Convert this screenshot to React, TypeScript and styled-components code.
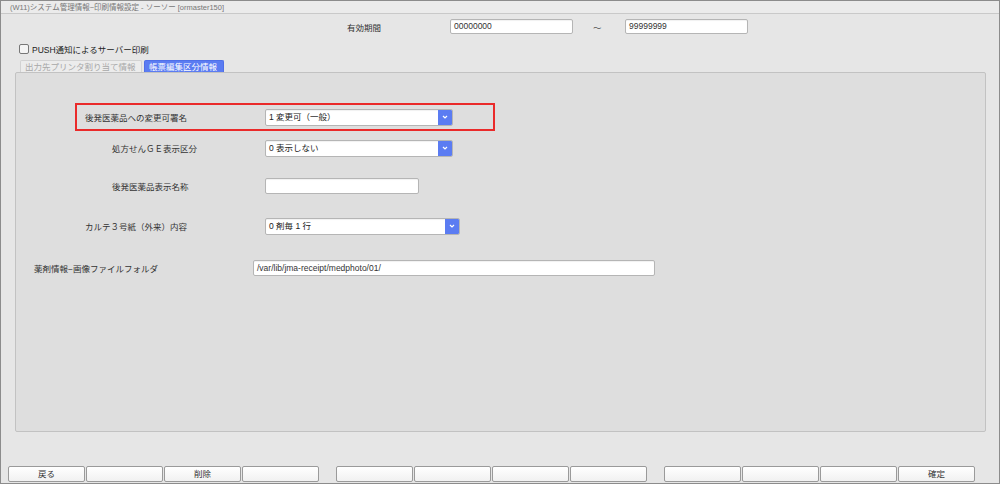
import React from 'react';
import styled, { createGlobalStyle } from 'styled-components';

const GlobalStyle = createGlobalStyle`
  html, body {
    margin: 0;
    padding: 0;
    background: #ffffff;
  }
  body {
    font-family: "Liberation Sans", "Noto Sans CJK JP", sans-serif;
  }
  * {
    box-sizing: border-box;
  }
`;

const Window = styled.div`
  width: 1000px;
  height: 484px;
  border: 1px solid #8c8c8c;
  background: #e6e6e6;
  display: flex;
  flex-direction: column;
  font-size: 8.5px;
  color: #222;
`;

const TitleBar = styled.div`
  height: 13px;
  line-height: 13px;
  padding-left: 9px;
  font-size: 7.5px;
  color: #777;
  background: #ebebeb;
  border-bottom: 1px solid #c9c9c9;
`;

const Header = styled.div`
  height: 58px;
  display: flex;
  flex-direction: column;
`;

const PeriodRow = styled.div`
  display: flex;
  align-items: center;
  height: 15px;
  margin-top: 5px;
  padding-left: 346px;
`;

const PeriodLabel = styled.span`
  width: 103px;
  color: #333;
`;

const Tilde = styled.span`
  width: 52px;
  padding-left: 20px;
  color: #555;
`;

const TextBox = styled.div<{ $width: number; $height?: number }>`
  width: ${(p) => p.$width}px;
  height: ${(p) => p.$height ?? 15}px;
  line-height: ${(p) => (p.$height ?? 15) - 2}px;
  background: #fff;
  border: 1px solid #b5b5b5;
  border-radius: 2px;
  padding-left: 3px;
  color: #333;
  box-shadow: inset 0 1px 1px rgba(0, 0, 0, 0.06);
  white-space: nowrap;
  overflow: hidden;
`;

const CheckRow = styled.label`
  display: flex;
  align-items: center;
  gap: 3px;
  height: 12px;
  margin-top: 9px;
  padding-left: 18px;
  color: #222;
`;

const CheckBox = styled.span`
  width: 10px;
  height: 10px;
  border: 1px solid #777;
  border-radius: 2px;
  background: #f4f4f4;
`;

const TabStrip = styled.div`
  display: flex;
  gap: 2px;
  margin-top: 5px;
  padding-left: 19px;
  height: 14px;
`;

const Tab = styled.div<{ $active?: boolean; $width: number }>`
  width: ${(p) => p.$width}px;
  height: 14px;
  line-height: 13px;
  padding-left: 4px;
  border: 1px solid ${(p) => (p.$active ? '#4f6fe8' : '#d2d2d2')};
  border-bottom: none;
  border-radius: 2px 2px 0 0;
  background: ${(p) => (p.$active ? '#5b7cf2' : '#ececec')};
  color: ${(p) => (p.$active ? '#ffffff' : '#a8a8a8')};
  white-space: nowrap;
`;

const Panel = styled.div`
  height: 360px;
  margin: 0 13px 0 14px;
  background: #dedede;
  border: 1px solid #c2c2c2;
  border-radius: 2px;
  display: flex;
  flex-direction: column;
`;

const Highlight = styled.div`
  display: flex;
  align-items: center;
  width: 420px;
  height: 28px;
  margin: 30px 0 0 59px;
  padding-left: 8px;
  border: 2px solid #ea2a2a;
`;

const Row = styled.div<{ $left: number; $top: number }>`
  display: flex;
  align-items: center;
  height: 20px;
  margin-top: ${(p) => p.$top}px;
  padding-left: ${(p) => p.$left}px;
`;

const Label = styled.span<{ $width: number }>`
  width: ${(p) => p.$width}px;
  color: #333;
  white-space: nowrap;
`;

const SelectBox = styled.div<{ $width: number }>`
  width: ${(p) => p.$width}px;
  height: 17px;
  display: flex;
  background: #fff;
  border: 1px solid #b5b5b5;
  border-radius: 2px;
  overflow: hidden;
  box-shadow: inset 0 1px 1px rgba(0, 0, 0, 0.06);
`;

const SelectText = styled.span`
  flex: 1;
  line-height: 15px;
  padding-left: 3px;
  color: #222;
  white-space: nowrap;
`;

const SelectButton = styled.span`
  width: 14px;
  display: flex;
  align-items: center;
  justify-content: center;
  background: #5b7cf2;
`;

const Footer = styled.div`
  flex: 1;
  display: flex;
  align-items: flex-end;
  gap: 17px;
  padding: 0 0 1px 7px;
`;

const ButtonGroup = styled.div`
  display: flex;
  gap: 1px;
`;

const FnButton = styled.button`
  width: 77px;
  height: 16px;
  padding: 0;
  font: inherit;
  font-size: 8.5px;
  color: #333;
  background: linear-gradient(#ffffff, #f1f1f1);
  border: 1px solid #9a9a9a;
  border-radius: 2px;
  line-height: 14px;
`;

const Chevron = () => (
  <svg width="6" height="4" viewBox="0 0 6 4">
    <path d="M1 1 L3 3 L5 1" stroke="#fff" strokeWidth="1.2" fill="none" />
  </svg>
);

const Select: React.FC<{ width: number; value: string }> = ({ width, value }) => (
  <SelectBox $width={width}>
    <SelectText>{value}</SelectText>
    <SelectButton>
      <Chevron />
    </SelectButton>
  </SelectBox>
);

const buttonGroups = [
  ['戻る', '', '削除', ''],
  ['', '', '', ''],
  ['', '', '', '確定'],
];

const App: React.FC = () => {
  return (
    <>
      <GlobalStyle />
      <Window>
        <TitleBar>(W11)システム管理情報−印刷情報設定 - ソーソー [ormaster150]</TitleBar>
        <Header>
          <PeriodRow>
            <PeriodLabel>有効期間</PeriodLabel>
            <TextBox $width={123}>00000000</TextBox>
            <Tilde>～</Tilde>
            <TextBox $width={123}>99999999</TextBox>
          </PeriodRow>
          <CheckRow>
            <CheckBox />
            PUSH通知によるサーバー印刷
          </CheckRow>
          <TabStrip>
            <Tab $width={122}>出力先プリンタ割り当て情報</Tab>
            <Tab $width={80} $active>
              帳票編集区分情報
            </Tab>
          </TabStrip>
        </Header>
        <Panel>
          <Highlight>
            <Label $width={180}>後発医薬品への変更可署名</Label>
            <Select width={188} value="1 変更可（一般）" />
          </Highlight>
          <Row $left={96} $top={7}>
            <Label $width={153}>処方せんＧＥ表示区分</Label>
            <Select width={188} value="0 表示しない" />
          </Row>
          <Row $left={96} $top={18}>
            <Label $width={153}>後発医薬品表示名称</Label>
            <TextBox $width={154} $height={16} />
          </Row>
          <Row $left={69} $top={20}>
            <Label $width={180}>カルテ３号紙（外来）内容</Label>
            <Select width={195} value="0 剤毎 1 行" />
          </Row>
          <Row $left={18} $top={22}>
            <Label $width={219}>薬剤情報−画像ファイルフォルダ</Label>
            <TextBox $width={402} $height={16}>/var/lib/jma-receipt/medphoto/01/</TextBox>
          </Row>
        </Panel>
        <Footer>
          {buttonGroups.map((group, gi) => (
            <ButtonGroup key={gi}>
              {group.map((label, bi) => (
                <FnButton key={bi}>{label}</FnButton>
              ))}
            </ButtonGroup>
          ))}
        </Footer>
      </Window>
    </>
  );
};

export default App;
